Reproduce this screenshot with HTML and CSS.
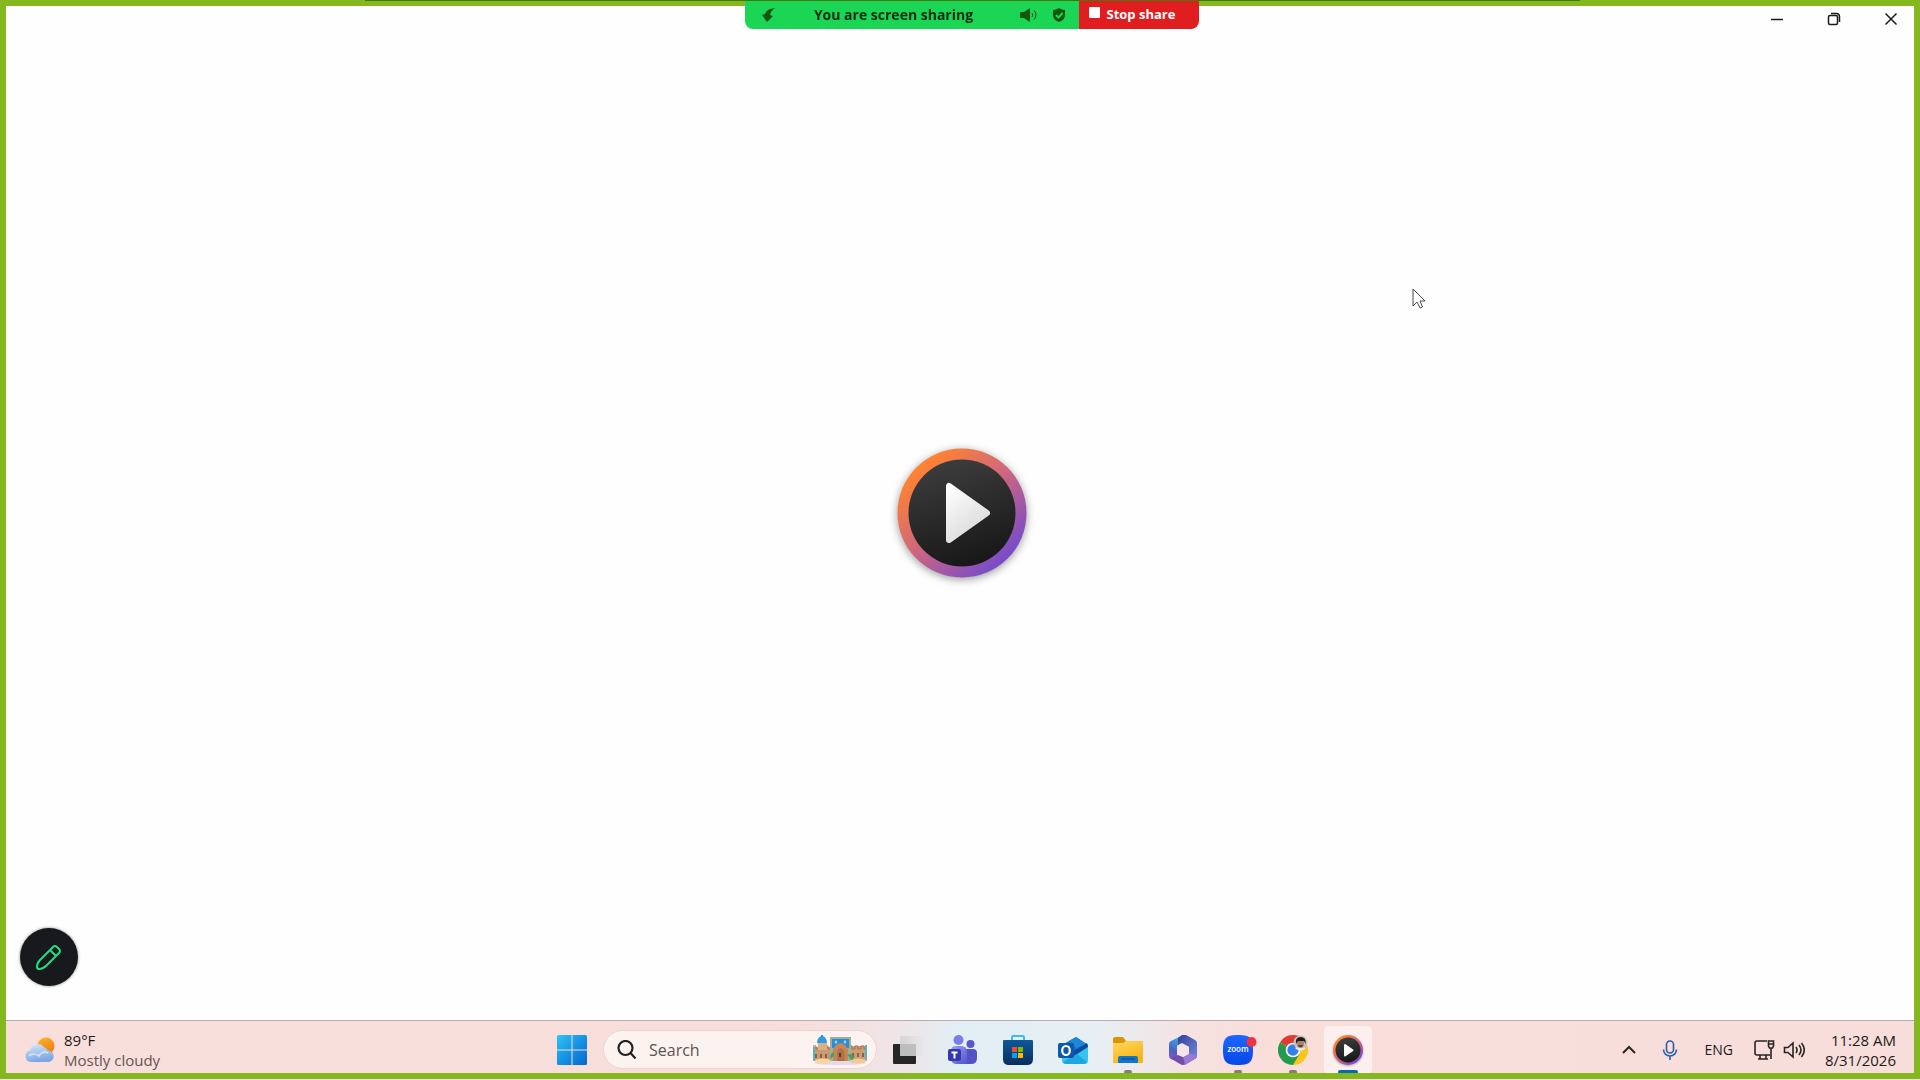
FILE: index.html
```html
<!DOCTYPE html>
<html lang="en">
<head>
    <meta charset="UTF-8">
    <meta name="viewport" content="width=device-width, initial-scale=1.0">
    <title>Media Player</title>
    <link rel="stylesheet" href="styles.css">
</head>
<body>
    <main class="window">
        <div class="title-bar">
            <button class="title-button" aria-label="Minimize">
                <svg width="14" height="14" viewBox="0 0 14 14"><path d="M1 7.5h12" /></svg>
            </button>
            <button class="title-button" aria-label="Restore">
                <svg width="14" height="14" viewBox="0 0 14 14"><rect x="1.5" y="3.5" width="9" height="9" rx="1.5" /><path d="M4 1.5h5.5a3 3 0 0 1 3 3V10" /></svg>
            </button>
            <button class="title-button" aria-label="Close">
                <svg width="14" height="14" viewBox="0 0 14 14"><path d="M1.5 1.5l11 11M12.5 1.5l-11 11" /></svg>
            </button>
        </div>
        <div class="splash">
            <svg class="splash-logo" width="160" height="160" viewBox="0 0 160 160">
                <defs>
                    <linearGradient id="ring" x1="0.15" y1="0.15" x2="0.8" y2="0.88">
                        <stop offset="0" stop-color="#ff8330" />
                        <stop offset="0.5" stop-color="#cd6681" />
                        <stop offset="1" stop-color="#7a4cc8" />
                    </linearGradient>
                    <linearGradient id="disc" x1="0.3" y1="0" x2="0.6" y2="1">
                        <stop offset="0" stop-color="#3d3d3d" />
                        <stop offset="1" stop-color="#171717" />
                    </linearGradient>
                    <linearGradient id="arrow" x1="0" y1="0" x2="0.6" y2="1">
                        <stop offset="0" stop-color="#ffffff" />
                        <stop offset="1" stop-color="#dadada" />
                    </linearGradient>
                </defs>
                <circle cx="80" cy="80" r="64.5" fill="url(#ring)" />
                <circle cx="80" cy="80" r="53.5" fill="url(#disc)" />
                <path d="M67 53v54l38-27z" fill="url(#arrow)" stroke="url(#arrow)" stroke-width="6" stroke-linejoin="round" />
            </svg>
        </div>
    </main>

    <footer class="taskbar">
        <button class="weather">
            <svg width="32" height="28" viewBox="0 0 32 28">
                <defs>
                    <linearGradient id="sun" x1="0" y1="0" x2="0.5" y2="1">
                        <stop offset="0" stop-color="#fbb62c" />
                        <stop offset="1" stop-color="#f07d12" />
                    </linearGradient>
                    <linearGradient id="cloud" x1="0" y1="0" x2="0.3" y2="1">
                        <stop offset="0" stop-color="#dfecfb" />
                        <stop offset="0.5" stop-color="#a9c8f0" />
                        <stop offset="1" stop-color="#7ea6e2" />
                    </linearGradient>
                </defs>
                <circle cx="22" cy="10" r="8.5" fill="url(#sun)" />
                <path d="M7 26a6 6 0 0 1-1-11.8A8 8 0 0 1 20 11a8 8 0 0 1 4 3.5A5.8 5.8 0 0 1 25 26z" fill="url(#cloud)" />
                <path d="M5 20c3-3 8-2 10 0 2-4 6-5 9-3" fill="none" stroke="#d8e7fa" stroke-width="1.5" />
            </svg>
            <span class="weather-text">
                <span>89°F</span>
                <span class="muted">Mostly cloudy</span>
            </span>
        </button>

        <nav class="apps">
            <button class="app" aria-label="Start">
                <svg width="30" height="30" viewBox="0 0 30 30">
                    <defs>
                        <linearGradient id="win" x1="0" y1="0" x2="1" y2="1">
                            <stop offset="0" stop-color="#2fc4f5" />
                            <stop offset="0.5" stop-color="#1593e4" />
                            <stop offset="1" stop-color="#0565cb" />
                        </linearGradient>
                    </defs>
                    <path fill="url(#win)" d="M1.5 0H14.5v14.5H0V1.5Q0 0 1.5 0zM15.5 0h13Q30 0 30 1.5v13H15.5zM0 15.5h14.5V30h-13Q0 30 0 28.5zM15.5 15.5H30v13q0 1.5-1.5 1.5h-13z" />
                </svg>
            </button>
            <label class="search">
                <svg width="20" height="20" viewBox="0 0 20 20"><circle cx="8.5" cy="8" r="7" /><path d="M13.5 13l5 5.5" /></svg>
                <input type="text" placeholder="Search" aria-label="Search">
                <svg class="search-art" width="56" height="30" viewBox="0 0 56 30">
                    <ellipse cx="28" cy="28" rx="26" ry="2" fill="#e4d8ea" />
                    <rect x="1" y="12" width="20" height="14" fill="#c99b72" />
                    <rect x="37" y="11" width="18" height="15" fill="#cb9d75" />
                    <path d="M1 11h3v3h3v-3h3v3h3v-3h3v3h5M37 11h3v3h3v-3h3v3h3v-3h3v3h3" fill="none" stroke="#a9714c" stroke-width="1" />
                    <rect x="6" y="7" width="9" height="8" fill="#d9b086" />
                    <path d="M5 8a5 7 0 0 1 10 0z" fill="#2d9be4" />
                    <path d="M9 0h2v2H9z" fill="#4a8fc0" />
                    <rect x="18" y="2" width="21" height="24" fill="#9cae9c" />
                    <rect x="20" y="4" width="17" height="9" fill="#2c8bd6" />
                    <path d="M24 5l1.5 2-1.5 2-1.5-2zM33 5l1.5 2-1.5 2-1.5-2z" fill="#9cdcf2" />
                    <path d="M21 26V15q2-6 7.5-7 5.5 1 7.5 7v11z" fill="#c98556" />
                    <path d="M25 26v-8q1-4 3.5-5 3 1 4 5v8z" fill="#b0714a" />
                    <path d="M4 23v-4M9 23v-4M14 23v-4M41 22v-4M46 22v-4M51 22v-4" stroke="#7a4c33" stroke-width="1.5" />
                    <path d="M28 18v4" stroke="#5c3828" stroke-width="2" />
                    <path d="M2 12v13M54 10v14" stroke="#54b3c2" stroke-width="2" />
                    <ellipse cx="11" cy="26" rx="8" ry="2.5" fill="#f6d49a" />
                    <ellipse cx="46" cy="26" rx="8" ry="2.5" fill="#f3c993" />
                    <path d="M18 24q0-6 4-7-1 3 1 4-3 1-5 3zM35 20q4-3 7 2 0 3-3 3-1-3-4-5z" fill="#48a05c" />
                </svg>
            </label>
            <button class="app" aria-label="Task View">
                <svg width="30" height="30" viewBox="0 0 30 30">
                    <defs>
                        <linearGradient id="pane" x1="0" y1="0" x2="1" y2="0">
                            <stop offset="0" stop-color="#d6d4d4" />
                            <stop offset="1" stop-color="#e9e8e8" />
                        </linearGradient>
                    </defs>
                    <rect y="9" width="23" height="20" rx="1" fill="#262626" />
                    <rect x="7" y="1" width="23" height="20" rx="1" fill="url(#pane)" />
                    <path d="M7 9h16v12H7z" fill="#b0b0b0" opacity="0.7" />
                </svg>
            </button>
            <button class="app" aria-label="Teams">
                <svg width="30" height="30" viewBox="0 0 30 30">
                    <defs>
                        <linearGradient id="teams" x1="0" y1="0" x2="0.8" y2="1">
                            <stop offset="0" stop-color="#9a9cf5" />
                            <stop offset="1" stop-color="#5356cb" />
                        </linearGradient>
                    </defs>
                    <circle cx="10.5" cy="5" r="5" fill="#7b7eea" />
                    <circle cx="22.5" cy="9" r="4" fill="#5658cb" />
                    <path d="M16 14h9q4 0 4 4v5q0 6-6 6h-7z" fill="#5452c5" />
                    <path d="M8 11h5q6 0 6 6v8q0 4 3 4H9q-6 0-6-6v-7q0-5 5-5z" fill="url(#teams)" />
                    <rect y="14" width="13" height="12" rx="2" fill="#3538ae" />
                    <path d="M3.5 17.5h6M6.5 17.5v6" stroke="#fff" stroke-width="2" />
                </svg>
            </button>
            <button class="app" aria-label="Microsoft Store">
                <svg width="30" height="30" viewBox="0 0 30 30">
                    <defs>
                        <linearGradient id="store" x1="0" y1="0" x2="0" y2="1">
                            <stop offset="0" stop-color="#0c599c" />
                            <stop offset="1" stop-color="#0b2d5c" />
                        </linearGradient>
                    </defs>
                    <path d="M9 6V2q0-1 1-1h10q1 0 1 1v4" fill="none" stroke="#37bff0" stroke-width="2" />
                    <path d="M1 5h28q1 0 1 1v18q0 6-6 6H6q-6 0-6-6V6q0-1 1-1z" fill="url(#store)" />
                    <path d="M9 12h5v5H9z" fill="#f25022" />
                    <path d="M15 12h5v5h-5z" fill="#7fba00" />
                    <path d="M9 18h5v5H9z" fill="#00a4ef" />
                    <path d="M15 18h5v5h-5z" fill="#ffb900" />
                </svg>
            </button>
            <button class="app" aria-label="Outlook">
                <svg width="30" height="30" viewBox="0 0 30 30">
                    <path d="M4 10L18 2l12 8v3L16 22 4 14z" fill="#126fc4" />
                    <path d="M11 6l7-4 12 8-9 6z" fill="#1a87d8" />
                    <path d="M8 20L29 8l1 4-14 11z" fill="#0c4b9c" />
                    <path d="M4 20l12 1 14-9v13q0 4-4 4H8q-4 0-4-4z" fill="#37c4ee" />
                    <path d="M5 27l14-8 10 8q-1 2-4 2H8q-2 0-3-2z" fill="#1fa5e4" />
                    <rect y="8" width="16" height="15" rx="2" fill="#0d57ad" />
                    <ellipse cx="8" cy="15.5" rx="3.8" ry="4.5" fill="none" stroke="#fff" stroke-width="2.2" />
                </svg>
            </button>
            <button class="app running" aria-label="File Explorer">
                <svg width="30" height="30" viewBox="0 0 30 30">
                    <defs>
                        <linearGradient id="folder" x1="0" y1="0" x2="0.5" y2="1">
                            <stop offset="0" stop-color="#ffd75c" />
                            <stop offset="1" stop-color="#f7b518" />
                        </linearGradient>
                    </defs>
                    <path d="M0 4q0-2 2-2h8l3 4h15q2 0 2 2v5H0z" fill="#d9940c" />
                    <path d="M0 8h10l3-2h15q2 0 2 2v20H0z" fill="url(#folder)" />
                    <path d="M5 28v-5q0-2 2-2h16q2 0 2 2v5z" fill="#1674c9" />
                    <path d="M8 24h14" stroke="#0d559f" stroke-width="1.5" />
                </svg>
            </button>
            <button class="app" aria-label="Microsoft 365">
                <svg width="30" height="30" viewBox="0 0 30 30">
                    <defs>
                        <linearGradient id="m365a" x1="0.5" y1="0" x2="0.2" y2="1">
                            <stop offset="0" stop-color="#3bb2ec" />
                            <stop offset="0.6" stop-color="#4a63c4" />
                            <stop offset="1" stop-color="#8a55c0" />
                        </linearGradient>
                        <linearGradient id="m365b" x1="0" y1="0" x2="1" y2="1">
                            <stop offset="0" stop-color="#344099" />
                            <stop offset="1" stop-color="#7189df" />
                        </linearGradient>
                    </defs>
                    <path d="M15 0L3 6q-2 1-2 3v12q0 2 2 3l6 2V12q0-2 2-3l7-4V1z" fill="url(#m365a)" />
                    <path d="M14 0h4l9 5q2 1 2 3v13q0 2-2 3l-6-3v-9l-7-4-4 2V3z" fill="url(#m365b)" />
                    <path d="M2 23l8-3 5 2 6-3 7 4-10 6q-3 2-6 0z" fill="#744cae" />
                    <path d="M21 18l8 3q0 2-2 3l-10 6-2-8z" fill="#9b79d2" />
                    <path d="M15 9l6 3v7l-6 3-6-3v-7z" fill="#f6e5e6" />
                </svg>
            </button>
            <button class="app running" aria-label="Zoom">
                <svg class="zoom-logo" width="30" height="30" viewBox="0 0 30 30">
                    <defs>
                        <linearGradient id="zoom" x1="0" y1="0" x2="0" y2="1">
                            <stop offset="0" stop-color="#1b68ff" />
                            <stop offset="1" stop-color="#0747e6" />
                        </linearGradient>
                    </defs>
                    <path d="M15 0c12 0 15 3 15 15s-3 15-15 15S0 27 0 15 3 0 15 0z" fill="url(#zoom)" />
                    <text x="15" y="17" class="zoom-word">zoom</text>
                    <circle cx="28.5" cy="7" r="5" fill="#ef3340" />
                </svg>
            </button>
            <button class="app running" aria-label="Chrome">
                <svg width="30" height="30" viewBox="0 0 30 30">
                    <path d="M15 15L2 7.5A15 15 0 0 1 28 7.5z" fill="#df3b30" />
                    <path d="M15 15l6.5-7.5H28A15 15 0 0 1 15 30z" fill="#fbc51c" />
                    <path d="M2 7.5A15 15 0 0 0 15 30l6.5-11L15 15z" fill="#249b4a" />
                    <circle cx="15" cy="15" r="7.3" fill="#fff" />
                    <circle cx="15" cy="15" r="5.7" fill="#347fe8" />
                    <circle cx="22.5" cy="7.5" r="7" fill="#c6c3bb" />
                    <path d="M17 13q5-2 11 0a7 7 0 0 1-11 0z" fill="#e9e7e4" />
                    <ellipse cx="22.5" cy="8.5" rx="3.5" ry="4.5" fill="#a88069" />
                    <path d="M18 9q-1-7 4.5-7 6 0 5 7l-1.5-3q-4 0-6 0z" fill="#201b1a" />
                    <path d="M20.5 11h4" stroke="#3e2a24" stroke-width="1.5" />
                </svg>
            </button>
            <button class="app running active" aria-label="Media Player">
                <svg width="30" height="30" viewBox="0 0 30 30">
                    <circle cx="15" cy="15" r="15" fill="url(#ring)" />
                    <circle cx="15" cy="15" r="12.5" fill="url(#disc)" />
                    <path d="M12 10v10.5l7.5-5.25z" fill="#fff" stroke="#fff" stroke-width="2" stroke-linejoin="round" />
                </svg>
            </button>
        </nav>

        <div class="tray">
            <button aria-label="Show hidden icons">
                <svg width="14" height="10" viewBox="0 0 14 10"><path d="M1 8l6-6 6 6" stroke-width="2" /></svg>
            </button>
            <button class="mic" aria-label="Microphone in use">
                <svg width="16" height="20" viewBox="0 0 16 20"><rect x="4.5" y="1" width="7" height="12" rx="3.5" /><path d="M1.5 9.5a6.5 6.5 0 0 0 13 0M8 16v4" /></svg>
            </button>
            <button>ENG</button>
            <button class="status" aria-label="Network and sound">
                <svg width="22" height="22" viewBox="0 0 22 22"><path d="M14 2H4Q2 2 2 4v10q0 2 2 2h13M7 16v4M13 16v4M5 20h10M18 9v11M15.5 2h5v5l-1 2h-3l-1-2zM15.5 5h5" /></svg>
                <svg width="22" height="20" viewBox="0 0 22 20"><path d="M1.5 7.5h3.5l5-4.5v14l-5-4.5H1.5zM13 7q2 3 0 6M16 5q4 5 0 10M18.5 3q5.5 7 0 14" /></svg>
            </button>
            <button class="clock">
                <span>11:28 AM</span>
                <span>8/31/2026</span>
            </button>
        </div>
    </footer>

    <div class="share-frame"></div>

    <div class="share-overlay">
        <div class="share-bar">
            <div class="share-status">
                <svg width="14" height="14" viewBox="0 0 14 14"><path d="M13 0Q4 1 3 6L0 7l5 7 6-6-3-1q0-3 5-7z" /></svg>
                <span class="share-text">You are screen sharing</span>
                <svg width="18" height="14" viewBox="0 0 18 14"><path d="M1 4h3l6-4v14l-6-4H1q-1 0-1-1V5q0-1 1-1z" /><path d="M12 5q1.5 2 0 4M14 2.5q4 4.5 0 9" class="sound-wave" /></svg>
                <svg width="12" height="14" viewBox="0 0 12 14"><path d="M6 0q3 2 6 2v5q0 5-6 7-6-2-6-7V2q3 0 6-2z" /><path d="M3 7l2.5 2.5L9.5 5" class="shield-check" /></svg>
            </div>
            <button class="stop-share"><span class="stop-icon"></span>Stop share</button>
        </div>
    </div>

    <button class="annotate" aria-label="Annotate">
        <svg width="26" height="26" viewBox="0 0 26 26"><path d="M17 3q2-2 4 0l2 2q2 2 0 4L11 21q-4 4-8 4-2 0-2-2 0-4 3-7zM14 6l6 6" /></svg>
    </button>

    <svg class="pointer" width="14" height="22" viewBox="0 0 14 22"><path d="M1 1v17l4-4 3 6 2.5-1-2.5-6h5z" /></svg>
</body>
</html>
```
FILE: styles.css
```css
* {
    box-sizing: border-box;
}
body {
    margin: 0;
    height: 100vh;
    display: flex;
    flex-direction: column;
    background: #fefefe;
    font-family: "Open Sans", "Noto Sans", sans-serif;
    font-size: 14px;
    color: #1c1a1a;
    overflow: hidden;
}
button {
    padding: 0;
    border: none;
    background: none;
    font: inherit;
    color: inherit;
    cursor: pointer;
}
svg {
    flex: none;
    display: block;
}

/* player window */
.window {
    flex: 1;
    display: flex;
    flex-direction: column;
}
.title-bar {
    display: flex;
    justify-content: flex-end;
    padding-right: 1px;
}
.title-button {
    width: 57px;
    height: 38px;
    display: flex;
    align-items: center;
    justify-content: center;
}
.title-button svg {
    fill: none;
    stroke: #1a1a1a;
    stroke-width: 1.5;
}
.splash {
    flex: 1;
    display: flex;
    align-items: center;
    justify-content: center;
    padding: 0 0 32px 4px;
}
.splash-logo {
    filter: drop-shadow(0 2px 4px rgba(0, 0, 0, 0.4));
}

/* taskbar */
.taskbar {
    height: 60px;
    display: grid;
    grid-template-columns: 1fr auto 1fr;
    align-items: center;
    padding: 0 24px 2px;
    border-top: 1px solid #bdadae;
    background: linear-gradient(90deg, #f8dfdb 0%, #f7dedb 42%, #eee5e8 47%, #e2eff5 50%, #e6eff4 57%, #f5e2e1 62%, #f9deda 66%, #f7dedb 100%);
}
.weather {
    display: flex;
    align-items: center;
    justify-self: start;
    gap: 8px;
    font-size: 15px;
    line-height: 20px;
    text-align: left;
}
.weather-text {
    display: flex;
    flex-direction: column;
}
.muted {
    color: #655553;
}
.apps {
    display: flex;
    align-items: center;
    gap: 7px;
}
.app {
    position: relative;
    width: 48px;
    height: 48px;
    border-radius: 5px;
    display: flex;
    align-items: center;
    justify-content: center;
}
.app.active {
    background: #fcf0ee;
}
.app.active svg {
    filter: drop-shadow(0 1px 1px rgba(0, 0, 0, 0.3));
}
.running::after {
    content: "";
    position: absolute;
    left: 50%;
    bottom: 0;
    width: 8px;
    height: 4px;
    margin-left: -4px;
    border-radius: 2px;
    background: #857c7c;
}
.running.active::after {
    width: 20px;
    margin-left: -10px;
    background: #0b68b2;
}
.search {
    width: 274px;
    height: 39px;
    display: flex;
    align-items: center;
    gap: 12px;
    padding: 0 8px 0 13px;
    border: 1px solid #ecd3d1;
    border-radius: 20px;
    background: #fcf3f1;
}
.search svg {
    fill: none;
    stroke: #222;
    stroke-width: 2.2;
}
.search .search-art {
    stroke: none;
}
.search input {
    flex: 1;
    min-width: 0;
    padding: 0;
    border: none;
    outline: none;
    background: none;
    font: inherit;
    font-size: 16px;
}
.search input::placeholder {
    color: #5c5351;
    opacity: 1;
}
.zoom-logo {
    overflow: visible;
}
.zoom-word {
    fill: #fff;
    font-size: 8px;
    font-weight: 600;
    text-anchor: middle;
}
.tray {
    display: flex;
    align-items: center;
    justify-self: end;
    gap: 26px;
}
.tray svg {
    fill: none;
    stroke: #2b2424;
    stroke-width: 1.6;
}
.tray .mic svg {
    stroke: #2b5cab;
}
.status {
    display: flex;
    align-items: center;
    gap: 8px;
    margin-left: -6px;
}
.clock {
    display: flex;
    flex-direction: column;
    align-items: flex-end;
    font-size: 15px;
    line-height: 20px;
    margin-left: -6px;
}

/* screen share overlay */
.share-frame {
    position: fixed;
    inset: 0 0 1px;
    border: 6px solid #84b81e;
    pointer-events: none;
}
.share-overlay {
    position: fixed;
    top: 0;
    left: 19%;
    right: 17.7%;
    display: flex;
    justify-content: center;
    border-top: 1px solid #46760f;
}
.share-bar {
    display: flex;
    height: 28px;
    border-radius: 0 0 8px 8px;
    overflow: hidden;
    font-weight: 700;
}
.share-status {
    display: flex;
    align-items: center;
    gap: 15px;
    width: 334px;
    padding: 0 14px 1px 17px;
    background: #1bd654;
    color: #0e2c14;
}
.share-status svg {
    fill: #14560f;
}
.share-status .sound-wave {
    fill: none;
    stroke: #14560f;
}
.share-status .shield-check {
    fill: none;
    stroke: #1bd654;
    stroke-width: 2;
}
.share-text {
    flex: 1;
    padding-right: 10px;
    text-align: center;
}
.stop-share {
    display: flex;
    align-items: center;
    gap: 6px;
    width: 120px;
    padding: 0 0 2px 10px;
    background: #e01e20;
    color: #fff;
    font-size: 13px;
    font-weight: 700;
}
.stop-icon {
    width: 11px;
    height: 11px;
    margin-bottom: 4px;
    border-radius: 1px;
    background: #fff;
}
.annotate {
    position: fixed;
    left: 20px;
    bottom: 94px;
    width: 58px;
    height: 58px;
    border-radius: 50%;
    display: flex;
    align-items: center;
    justify-content: center;
    background: #17191c;
    box-shadow: 0 0 3px rgba(0, 0, 0, 0.5);
}
.annotate svg {
    fill: none;
    stroke: #1fe082;
    stroke-width: 2;
}
.pointer {
    position: fixed;
    left: 1412px;
    top: 288px;
    fill: #fff;
    stroke: #4a4a4a;
    pointer-events: none;
}
```
